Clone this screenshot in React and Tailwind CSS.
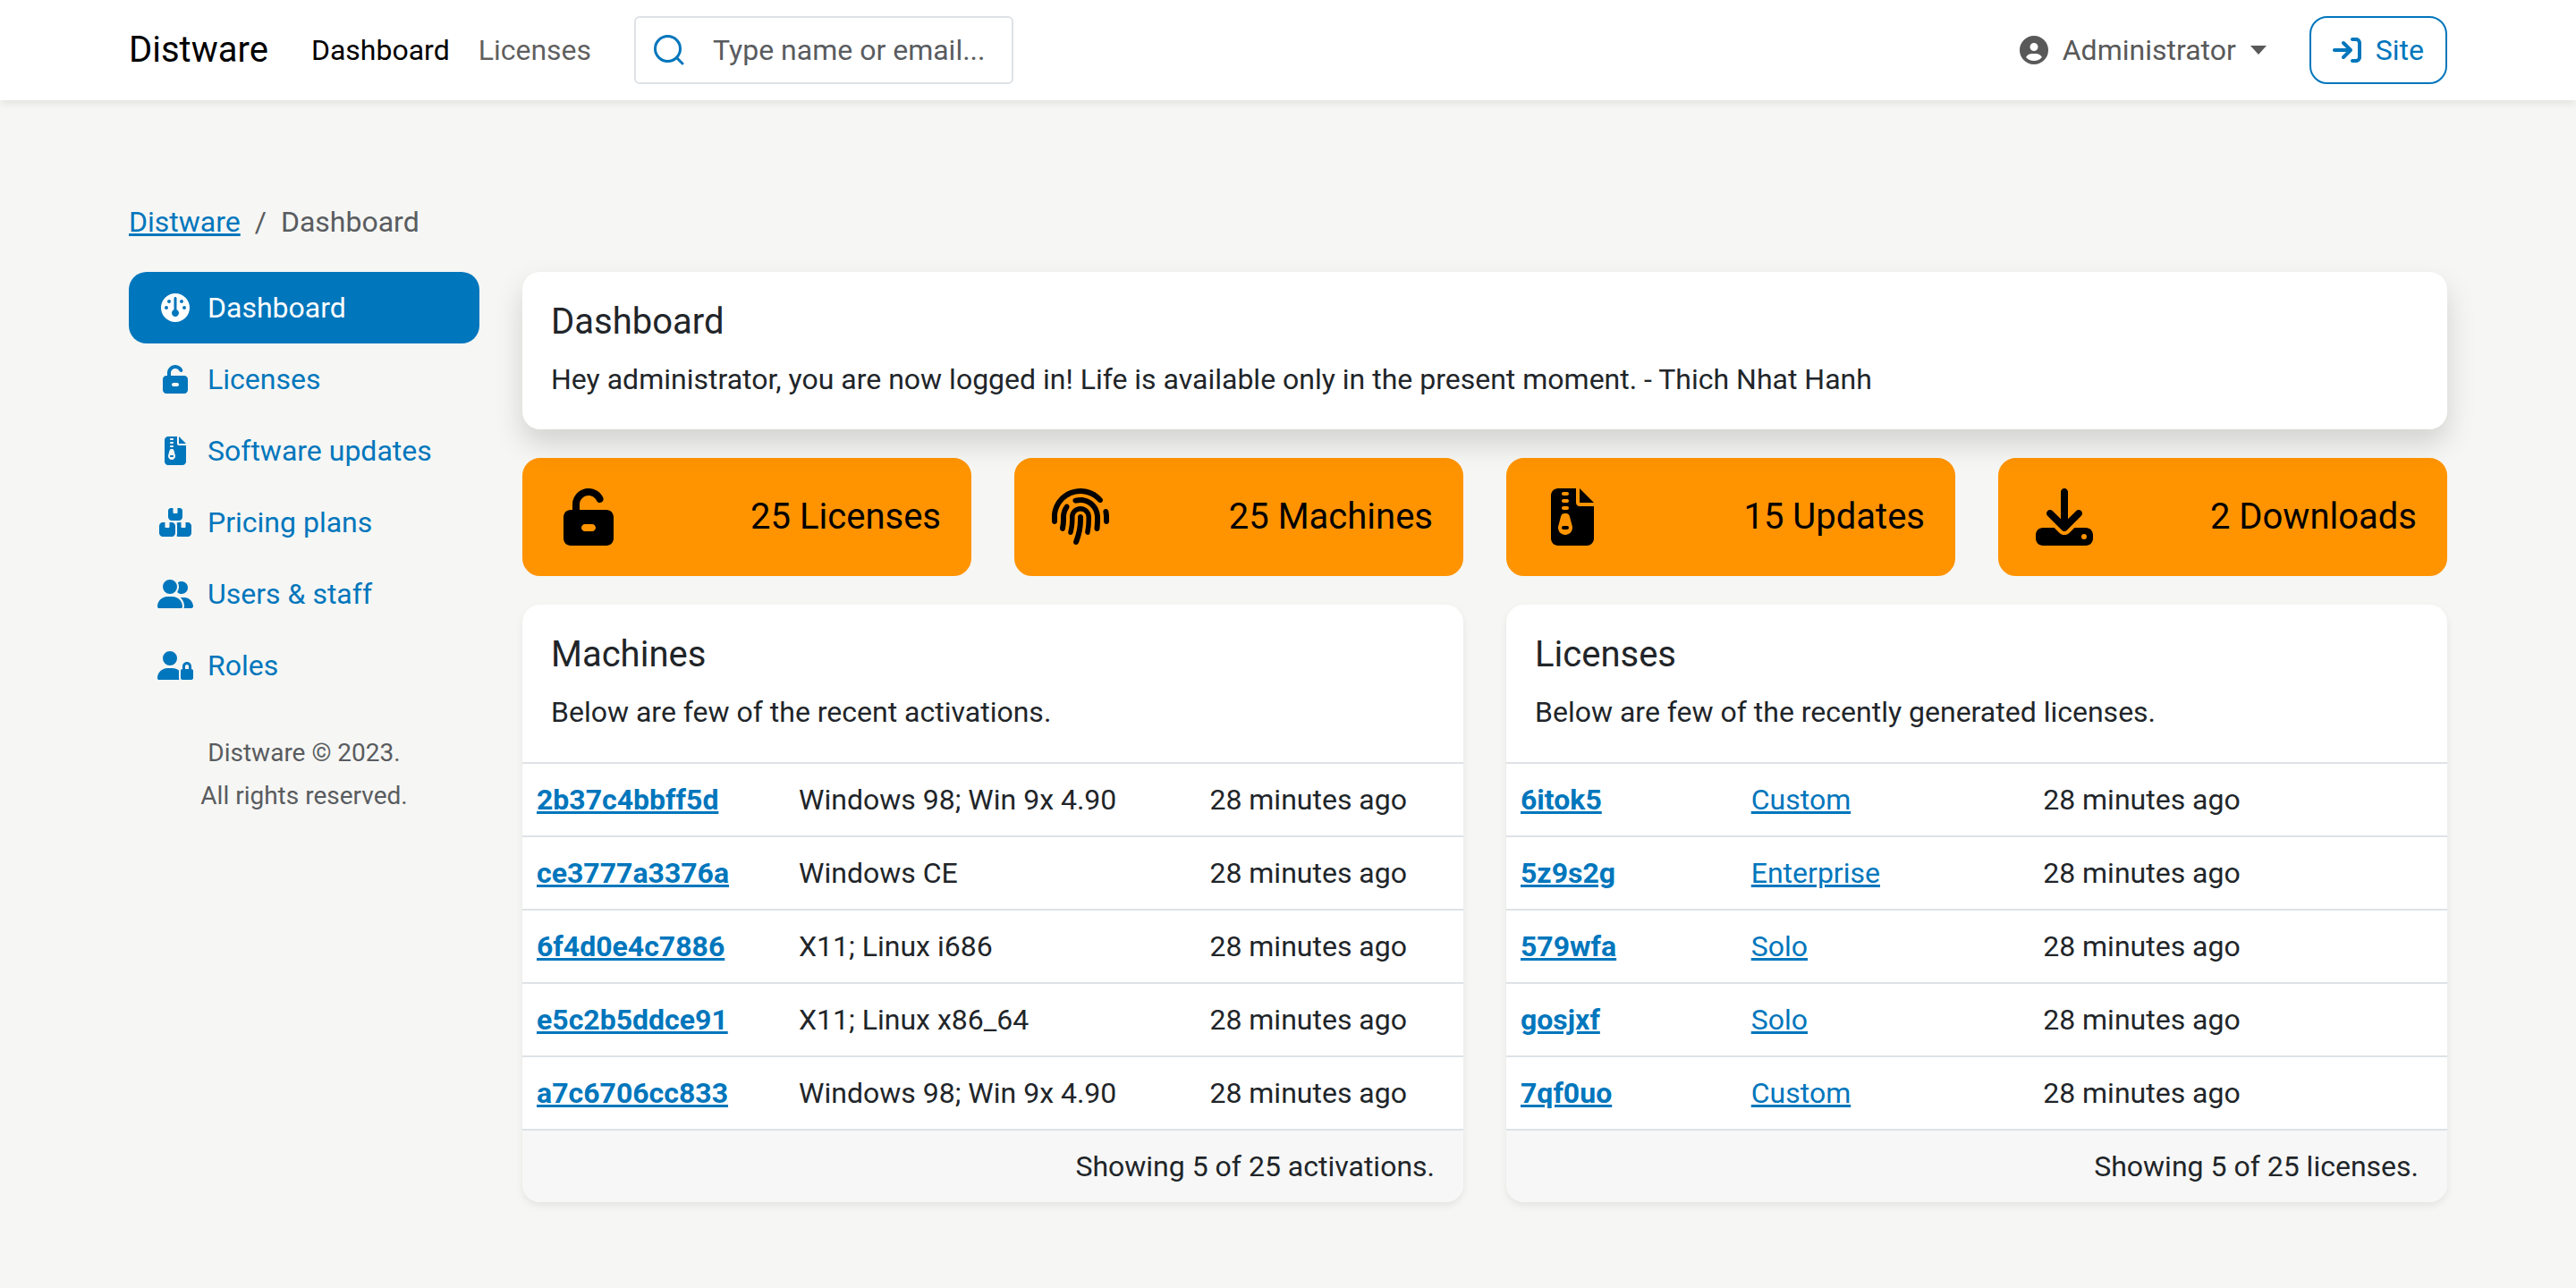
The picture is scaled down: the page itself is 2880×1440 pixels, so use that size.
import {
  FaGauge,
  FaUnlockKeyhole,
  FaFileZipper,
  FaBoxesStacked,
  FaUserGroup,
  FaUserLock,
  FaFingerprint,
  FaDownload,
  FaArrowRightToBracket,
  FaCircleUser,
} from "react-icons/fa6";

const NAV = [
  { label: "Dashboard", icon: FaGauge, active: true },
  { label: "Licenses", icon: FaUnlockKeyhole },
  { label: "Software updates", icon: FaFileZipper },
  { label: "Pricing plans", icon: FaBoxesStacked },
  { label: "Users & staff", icon: FaUserGroup },
  { label: "Roles", icon: FaUserLock },
];

const STATS = [
  { label: "25 Licenses", icon: FaUnlockKeyhole },
  { label: "25 Machines", icon: FaFingerprint },
  { label: "15 Updates", icon: FaFileZipper },
  { label: "2 Downloads", icon: FaDownload },
];

const MACHINES = [
  ["2b37c4bbff5d", "Windows 98; Win 9x 4.90"],
  ["ce3777a3376a", "Windows CE"],
  ["6f4d0e4c7886", "X11; Linux i686"],
  ["e5c2b5ddce91", "X11; Linux x86_64"],
  ["a7c6706cc833", "Windows 98; Win 9x 4.90"],
];

const LICENSES = [
  ["6itok5", "Custom"],
  ["5z9s2g", "Enterprise"],
  ["579wfa", "Solo"],
  ["gosjxf", "Solo"],
  ["7qf0uo", "Custom"],
];

function Header() {
  return (
    <header className="bg-white shadow-[0_4px_8px_rgba(0,0,0,0.075)]">
      <div className="flex h-28 items-center px-36">
        <a href="#" className="text-[40px] leading-[60px] text-black">
          Distware
        </a>
        <nav className="ml-12 flex gap-8">
          <a href="#" className="text-black">Dashboard</a>
          <a href="#" className="text-black/65">Licenses</a>
        </nav>
        <label className="ml-12 flex h-[76px] w-[424px] items-center rounded-md border-2 border-[#dee2e6] bg-white pl-5">
          <svg viewBox="1 1 34 34" className="h-[34px] w-[34px] shrink-0 text-[#0076bc]" fill="none" stroke="currentColor" strokeWidth="3" strokeLinecap="round" aria-hidden="true">
            <circle cx="16.5" cy="16.5" r="14" />
            <path d="M26.5 26.5 33 33" />
          </svg>
          <input
            type="search"
            aria-label="Search"
            placeholder="Type name or email..."
            className="ml-8 w-full min-w-0 bg-transparent outline-none placeholder:text-[#595c5f]"
          />
        </label>
        <button type="button" className="ml-auto flex items-center text-[#595959]">
          <FaCircleUser aria-hidden="true" className="h-8 w-8" />
          <span className="ml-4">Administrator</span>
          <svg viewBox="0 0 18 10" className="ml-4 h-[10px] w-[18px]" fill="currentColor" aria-hidden="true">
            <path d="M0 0h18L9 10z" />
          </svg>
        </button>
        <a href="#" className="ml-12 flex h-[76px] items-center gap-4 rounded-[20px] border-2 border-[#0076bc] px-6 text-[#0076bc]">
          <FaArrowRightToBracket aria-hidden="true" className="h-8 w-8" />
          Site
        </a>
      </div>
    </header>
  );
}

function Sidebar() {
  return (
    <aside className="w-[392px] shrink-0">
      <nav className="flex flex-col">
        {NAV.map(({ label, icon: Icon, active }) => (
          <a
            key={label}
            href="#"
            className={`flex h-20 items-center gap-4 rounded-[20px] px-8 ${active ? "bg-[#0076bc] text-white" : "text-[#0076bc]"}`}
          >
            <Icon aria-hidden="true" className="h-8 w-10" />
            {label}
          </a>
        ))}
      </nav>
      <p className="mt-[34px] text-center text-[28px] leading-[48px] text-[#595c5f]">
        Distware © 2023.
        <br />
        All rights reserved.
      </p>
    </aside>
  );
}

function CardHeading({ title, text }) {
  return (
    <div className="px-8 pt-8">
      <h2 className="mb-4 text-[40px] leading-[48px]">{title}</h2>
      <p>{text}</p>
    </div>
  );
}

function TableCard({ title, text, rows, footer, linkSecond }) {
  return (
    <section className="overflow-hidden rounded-[20px] bg-white shadow-[0_4px_8px_rgba(0,0,0,0.075)]">
      <CardHeading title={title} text={text} />
      <table className="mt-8 w-full">
        <tbody>
          {rows.map(([id, info]) => (
            <tr key={id} className="border-t-2 border-[#dee2e6]">
              <th scope="row" className="p-4 text-left font-bold">
                <a href="#" className="text-[#0076bc] underline">{id}</a>
              </th>
              <td className="p-4">
                {linkSecond ? (
                  <a href="#" className="text-[#0076bc] underline">{info}</a>
                ) : (
                  info
                )}
              </td>
              <td className="p-4">28 minutes ago</td>
            </tr>
          ))}
        </tbody>
      </table>
      <div className="border-t-2 border-[#dee2e6] bg-[#f7f7f7] px-8 py-4 text-right">{footer}</div>
    </section>
  );
}

export default function App() {
  return (
    <div className="min-h-screen bg-[#f6f6f4] font-['Roboto',sans-serif] text-[32px] leading-[48px] text-[#212529]">
      <Header />
      <main className="px-36 pt-28 pb-24">
        <nav aria-label="Breadcrumb" className="mb-8">
          <ol className="flex gap-4">
            <li><a href="#" className="text-[#0076bc] underline">Distware</a></li>
            <li aria-hidden="true" className="text-[#595c5f]">/</li>
            <li aria-current="page" className="text-[#595c5f]">Dashboard</li>
          </ol>
        </nav>
        <div className="flex items-start gap-12">
          <Sidebar />
          <div className="flex min-w-0 flex-1 flex-col gap-8">
            <section className="z-10 rounded-[20px] bg-white pb-8 shadow-[0_16px_32px_rgba(0,0,0,0.15)]">
              <CardHeading
                title="Dashboard"
                text="Hey administrator, you are now logged in! Life is available only in the present moment. - Thich Nhat Hanh"
              />
            </section>
            <div className="grid grid-cols-4 gap-12">
              {STATS.map(({ label, icon: Icon }) => (
                <a key={label} href="#" className="flex h-[132px] items-center justify-between rounded-[20px] border-2 border-[#ff9400] bg-[#ff9400] px-8 text-[40px] text-black">
                  <Icon aria-hidden="true" className="h-16 w-20" />
                  {label}
                </a>
              ))}
            </div>
            <div className="grid grid-cols-2 items-start gap-12">
              <TableCard
                title="Machines"
                text="Below are few of the recent activations."
                rows={MACHINES}
                footer="Showing 5 of 25 activations."
              />
              <TableCard
                title="Licenses"
                text="Below are few of the recently generated licenses."
                rows={LICENSES}
                footer="Showing 5 of 25 licenses."
                linkSecond
              />
            </div>
          </div>
        </div>
      </main>
    </div>
  );
}
